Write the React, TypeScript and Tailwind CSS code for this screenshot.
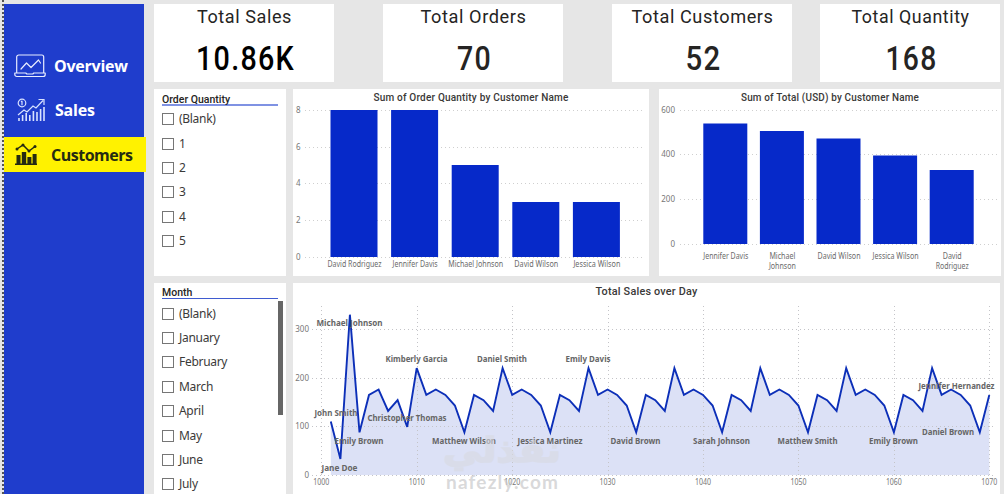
const DIN = 'font-[Roboto,"Liberation_Sans",sans-serif]';

const kpis = [
  { label: 'Total Sales', value: '10.86K', lw: 95, vw: 99, color: '#000000', card: '' },
  { label: 'Total Orders', value: '70', lw: 106, vw: 35, color: '#252423', card: 'ml-[49px]' },
  { label: 'Total Customers', value: '52', lw: 142, vw: 36, color: '#252423', card: 'ml-[49px]' },
  { label: 'Total Quantity', value: '168', lw: 118, vw: 52, color: '#252423', card: 'ml-[28px]' },
];

const months = ['(Blank)', 'January', 'February', 'March', 'April', 'May', 'June', 'July'];
const quantities = ['(Blank)', '1', '2', '3', '4', '5'];

// daily totals, the pattern repeats from day 1010 on
const cycle = [220, 165, 176, 165, 143, 88, 165, 154, 132];
const sales = [110, 33, 330, 88, 165, 176, 132, 154, 99].concat(
  Array.from({ length: 61 }, (_, i) => cycle[i % 9]),
);

const px = (day: number) => 28.3 + (day - 1000) * 9.543;
const py = (v: number) => 192 - v * 0.4857;

const line = sales.map((v, i) => `${px(1001 + i).toFixed(1)},${py(v).toFixed(1)}`).join(' ');

// text, centre x, y, width
const pointLabels: [string, number, number, number][] = [
  ['Michael Johnson', 56.5, 43, 66],
  ['Kimberly Garcia', 123.5, 79, 62],
  ['Daniel Smith', 209, 79, 50],
  ['Emily Davis', 295, 79, 45],
  ['John Smith', 43, 133, 43],
  ['Christopher Thomas', 114, 138, 79],
  ['Emily Brown', 66, 161, 49],
  ['Matthew Wilson', 171, 161, 64],
  ['Jessica Martinez', 257, 161, 65],
  ['David Brown', 342.5, 161, 50],
  ['Sarah Johnson', 428.5, 161, 57],
  ['Matthew Smith', 514.5, 161, 60],
  ['Emily Brown', 600.5, 161, 49],
  ['Daniel Brown', 655, 152, 52],
  ['Jennifer Hernandez', 663.5, 106, 76],
  ['Jane Doe', 46.5, 188, 36],
];

function ChartTitle({ x, width, children }: { x: number; width: number; children: string }) {
  return (
    <text
      x={x} y={11.5} textAnchor="middle" textLength={width} lengthAdjust="spacingAndGlyphs"
      className={`${DIN} text-[11px] font-medium tracking-[0.2px]`} fill="#3a3938"
    >
      {children}
    </text>
  );
}

type Bar = { name: string[]; top: number; w: number[] };

function BarChart(props: {
  title: string; titleX: number; titleW: number; width: number; axisX: number; gridX: number;
  ticks: [string, number][]; base: number; first: number; step: number; barW: number; bars: Bar[]; labelY: number;
}) {
  const { ticks, bars, base } = props;
  return (
    <svg width={props.width} height={187} className='font-["Noto_Sans",sans-serif] text-[8px]'>
      <ChartTitle x={props.titleX} width={props.titleW}>{props.title}</ChartTitle>
      {ticks.map(([t, y]) => (
        <g key={t}>
          <line x1={props.gridX} x2={props.width - 4} y1={y + 0.5} y2={y + 0.5} stroke="#cfcfcf" strokeDasharray="1 3" />
          <text x={props.axisX} y={y + 3} textAnchor="end" fill="#777777">{t}</text>
        </g>
      ))}
      {bars.map((b, i) => {
        const x = props.first + i * props.step;
        return (
          <g key={b.name[0] + i}>
            <rect x={x} y={b.top} width={props.barW} height={base - b.top} fill="#0629c9" />
            {b.name.map((n, j) => (
              <text
                key={n} x={x + props.barW / 2 + 0.5} y={props.labelY + j * 10} textAnchor="middle"
                textLength={b.w[j]} lengthAdjust="spacingAndGlyphs" fill="#6b6b6b"
              >
                {n}
              </text>
            ))}
          </g>
        );
      })}
    </svg>
  );
}

function Slicer({ title, items, className, rule, list }: { title: string; items: string[]; className: string; rule: string; list: string }) {
  return (
    <div className={`w-[132px] shrink-0 overflow-hidden bg-white pl-2 ${className}`}>
      <div className={`${DIN} w-[116px] text-[10.5px] leading-[19px] font-medium text-[#252423] ${rule}`}>
        {title}
      </div>
      <div className={list}>
        {items.map(item => (
          <div key={item} className="flex h-[24.4px] items-center gap-[5px]">
            <span className="h-3 w-3 shrink-0 border border-[#767676] bg-white" />
            <span className='font-["Noto_Sans",sans-serif] text-[12px] tracking-[-0.3px] text-[#3b3a39]'>{item}</span>
          </div>
        ))}
      </div>
    </div>
  );
}

function LaptopIcon() {
  return (
    <svg width="32" height="24" viewBox="0 0 32 24" fill="none" stroke="#e8edff" strokeWidth="1.2" strokeLinejoin="round" strokeLinecap="round">
      <path d="M2.7 18.5V3a2 2 0 0 1 2-2h23a2 2 0 0 1 2 2v15.5M.8 19h11l1 1h6l1-1h11.4v1.5a2 2 0 0 1-2 2H2.8a2 2 0 0 1-2-2z" />
      <path d="m7 15 5.500-6 4.500 4.500L24.500 6l2 3" />
    </svg>
  );
}

function SalesIcon() {
  return (
    <svg width="28" height="24" viewBox="0 0 28 24" fill="none" stroke="#d8e2ff" strokeWidth="1.2">
      <circle cx="5" cy="5" r="3.8" />
      <path d="M5 2.8v4.400M4 3.800l1-.8M1 17l6-5 3 2 6-6 3 2 7-7.500M21.500 1.500H27V7" />
      <path strokeWidth="1.6" d="M2 23v-3M5.600 23v-6M9.200 23v-8M12.800 23v-6M16.400 23V13M20 23v-9M23.600 23V11M27 23V9" />
    </svg>
  );
}

function CustomersIcon() {
  return (
    <svg width="24" height="23" viewBox="0 0 24 23" fill="#252b12">
      <path d="M1 20.500h22V22H1zM2.500 12h4v8.500h-4zM7.800 9h4.400v11.500H7.800zM13.400 14h4v6.500h-4zM18.600 11h4v9.500h-4z" />
      <path d="m3 6 6-4 6 6 6-4.500" fill="none" stroke="#252b12" strokeWidth="1.5" />
      <circle cx="3" cy="6" r="1.5" />
      <circle cx="9" cy="2" r="1.5" />
      <circle cx="15" cy="8" r="1.5" />
      <circle cx="21" cy="3.5" r="1.5" />
    </svg>
  );
}

export default function App() {
  return (
    <div className="flex h-[494px] w-[1004px] overflow-hidden bg-[#e6e6e6]">
      {/* Sidebar */}
      <div className="mr-2 flex w-[146px] shrink-0 pl-0.5">
        <div className="w-0.5 shrink-0 bg-[repeating-linear-gradient(to_bottom,#555555_0_2px,#e6e6e6_2px_4px)]" />
        <nav className='mt-1 w-[140px] bg-[#1f3dcc] pt-[40px] font-["Open_Sans","Noto_Sans",sans-serif] text-base font-bold text-white'>
          <div className="flex h-11 items-center pl-[10px]">
            <LaptopIcon />
            <svg width="80" height="24" className="ml-[8px]"><text x="0" y="18" textLength="74" fill="white">Overview</text></svg>
          </div>
          <div className="flex h-11 items-center pl-[13px]">
            <SalesIcon />
            <svg width="80" height="24" className="ml-[10px]"><text x="0" y="18" textLength="40" fill="white">Sales</text></svg>
          </div>
          <div className="mt-[5px] flex h-[35px] w-[142px] items-center bg-[#fff200] pl-[10px]">
            <CustomersIcon />
            <svg width="90" height="24" className="ml-[13px]"><text x="0" y="18" textLength="82" fill="#252b12">Customers</text></svg>
          </div>
        </nav>
      </div>

      <div className="flex w-[847px] flex-col pt-1">
        {/* KPI cards */}
        <div className="flex h-[78px]">
          {kpis.map(k => (
            <div key={k.label} className={`w-[180px] shrink-0 bg-white ${k.card}`}>
              <svg width="180" height="78" className={DIN} fill={k.color} textAnchor="middle">
                <text x="90.5" y="19" textLength={k.lw} lengthAdjust="spacingAndGlyphs" className="text-[19px] tracking-[0.6px]" fill="#252423">
                  {k.label}
                </text>
                <text x="91.5" y="65.5" textLength={k.vw} lengthAdjust="spacingAndGlyphs" className="text-[34px] font-medium tracking-[1.5px]">
                  {k.value}
                </text>
              </svg>
            </div>
          ))}
        </div>

        {/* Bar charts */}
        <div className="mt-[7px] flex h-[187px]">
          <Slicer title="Order Quantity" items={quantities} className="pt-px" rule="h-4 border-b-2 border-[#7f92e3]" list="pt-px" />
          <div className="ml-[7px] w-[356px] bg-white">
            <BarChart
              title="Sum of Order Quantity by Customer Name"
              titleX={178} titleW={195} width={356} axisX={7.5} gridX={12}
              ticks={[['8', 21], ['6', 58], ['4', 94], ['2', 131], ['0', 168]]}
              base={168} first={37.5} step={60.6} barW={47} labelY={178}
              bars={[
                { name: ['David Rodriguez'], top: 21, w: [54] },
                { name: ['Jennifer Davis'], top: 21, w: [45] },
                { name: ['Michael Johnson'], top: 76, w: [55] },
                { name: ['David Wilson'], top: 113, w: [44] },
                { name: ['Jessica Wilson'], top: 113, w: [47] },
              ]}
            />
          </div>
          <div className="ml-[10px] w-[342px] bg-white">
            <BarChart
              title="Sum of Total (USD) by Customer Name"
              titleX={171} titleW={178} width={342} axisX={16} gridX={21}
              ticks={[['600', 21], ['400', 65], ['200', 110], ['0', 155]]}
              base={155} first={44.3} step={56.6} barW={44} labelY={170}
              bars={[
                { name: ['Jennifer Davis'], top: 34.5, w: [45] },
                { name: ['Michael', 'Johnson'], top: 42, w: [26, 27] },
                { name: ['David Wilson'], top: 49.5, w: [43] },
                { name: ['Jessica Wilson'], top: 66.5, w: [46] },
                { name: ['David', 'Rodriguez'], top: 81, w: [19, 33] },
              ]}
            />
          </div>
        </div>

        {/* Sales over time */}
        <div className="mt-[7px] flex h-[211px]">
          <div className="relative">
            <Slicer title="Month" items={months} className="h-full" rule="h-4 border-b border-[#3f5bd0]" list="pt-[2.5px]" />
            <div className="absolute top-[18px] left-[124px] h-[114px] w-[5px] bg-[#666666]" />
          </div>
          <div className="ml-[7px] w-[707px] bg-white">
            <svg width="707" height="211" className='font-["Noto_Sans",sans-serif] text-[8px]'>
              <ChartTitle x={353.5} width={102}>Total Sales over Day</ChartTitle>
              <polygon points={`${px(1001)},192 ${line} ${px(1070)},192`} fill="#dce1f6" />
              {[0, 100, 200, 300].map(v => (
                <g key={v}>
                  <line x1="19" x2="700" y1={Math.round(py(v)) + 0.5} y2={Math.round(py(v)) + 0.5} stroke="#c4c4c8" strokeDasharray="1 3" />
                  <text x="16" y={py(v) + 3} textAnchor="end" fill="#777777">{v}</text>
                </g>
              ))}
              {[1000, 1010, 1020, 1030, 1040, 1050, 1060, 1070].map(d => (
                <g key={d}>
                  <line x1={Math.round(px(d)) + 0.5} x2={Math.round(px(d)) + 0.5} y1="23" y2="192" stroke="#c4c4c8" strokeDasharray="1 3" />
                  <text x={px(d)} y="202" textAnchor="middle" textLength="16" lengthAdjust="spacingAndGlyphs" fill="#777777">{d}</text>
                </g>
              ))}
              <polyline points={line} fill="none" stroke="#0c2fb8" strokeWidth="1.9" />
              {pointLabels.map(([t, x, y, w]) => (
                <text key={t + x} x={x} y={y} textAnchor="middle" textLength={w} lengthAdjust="spacingAndGlyphs" fill="#666666" className="font-bold">{t}</text>
              ))}
              {/* watermark */}
              <text x="209" y="206" textAnchor="middle" textLength="112" fill="#c8c8ca" fillOpacity="0.7" className="font-[Lato,sans-serif] text-[19px] font-bold">nafezly.com</text>
              <text x="209" y="179" textAnchor="middle" textLength="118" lengthAdjust="spacingAndGlyphs" fill="#d8dae2" stroke="#d8dae2" strokeWidth="1.5" opacity="0.6" className='font-["DejaVu_Sans",sans-serif] text-[34px] font-bold'>نفذلي</text>
            </svg>
          </div>
        </div>
      </div>
    </div>
  );
}
